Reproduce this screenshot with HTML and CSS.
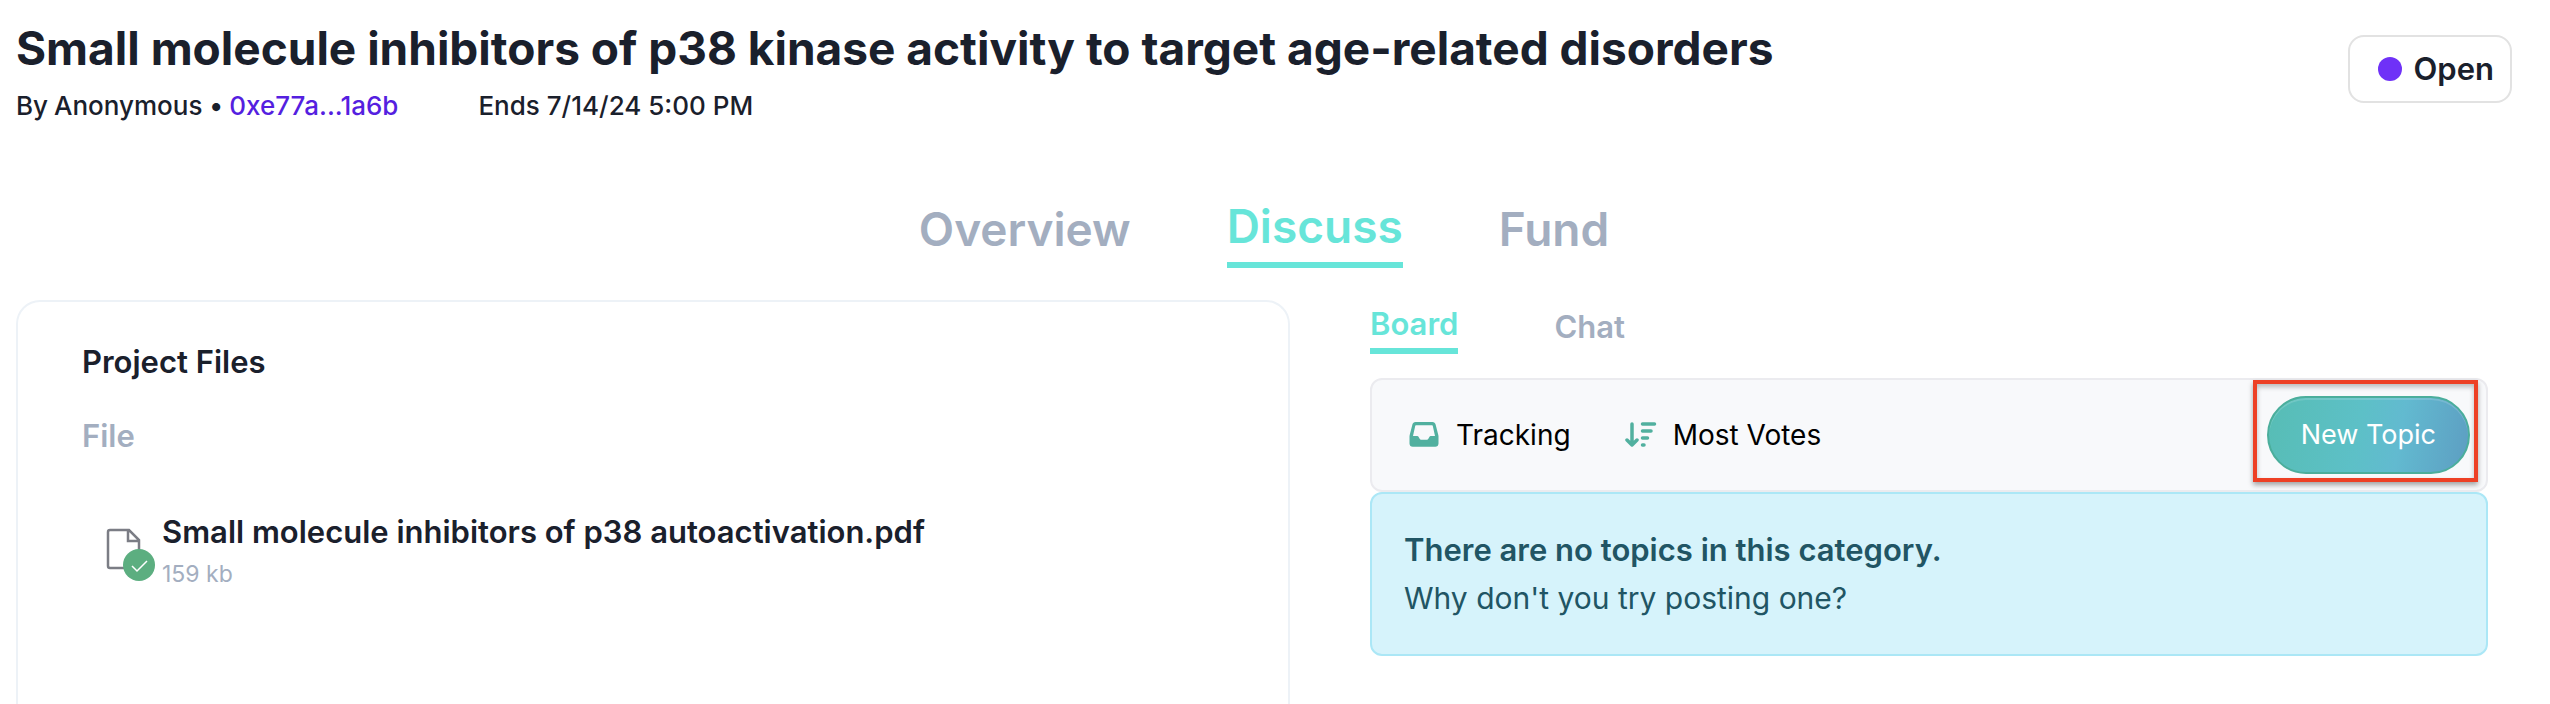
FILE: index.html
```html
<!DOCTYPE html>
<html lang="en">
<head>
<meta charset="utf-8">
<meta name="viewport" content="width=device-width, initial-scale=1">
<title>Small molecule inhibitors of p38 kinase activity</title>
<link rel="stylesheet" href="styles.css">
</head>
<body>
<div class="page">
  <header class="header">
    <div>
      <h1 class="title">Small molecule inhibitors of p38 kinase activity to target age-related disorders</h1>
      <div class="meta">
        <span class="author"><span>By</span><span>Anonymous •</span><a class="address" href="#">0xe77a...1a6b</a></span>
        <span>Ends 7/14/24 5:00 PM</span>
      </div>
    </div>
    <div class="status"><span class="dot"></span>Open</div>
  </header>

  <nav class="tabs">
    <a class="tab" href="#">Overview</a>
    <a class="tab active" href="#" aria-current="page">Discuss</a>
    <a class="tab" href="#">Fund</a>
  </nav>

  <main class="columns">
    <section class="card">
      <h2 class="card-title">Project Files</h2>
      <h3 class="card-label">File</h3>
      <div class="file">
        <svg class="file-icon" viewBox="0 0 50 54" aria-hidden="true">
          <path d="M2 4a2 2 0 0 1 2-2h19l10 10v26a2 2 0 0 1-2 2H4a2 2 0 0 1-2-2zM22 2v11h11" fill="none" stroke="#7b7d85" stroke-width="2.500"/>
          <circle cx="33" cy="37" r="16" fill="#5cae80"/>
          <path d="M26 38l5 5 10-10" fill="none" stroke="#fff" stroke-width="1.5"/>
        </svg>
        <div>
          <div class="file-name">Small molecule inhibitors of p38 autoactivation.pdf</div>
          <div class="file-size">159 kb</div>
        </div>
      </div>
    </section>

    <section class="board">
      <nav class="subtabs">
        <a class="subtab active" href="#" aria-current="page">Board</a>
        <a class="subtab" href="#">Chat</a>
      </nav>
      <div class="toolbar">
        <button class="filter" type="button">
          <svg class="icon" viewBox="0 0 32 28" aria-hidden="true">
            <path fill="#51b09f" fill-rule="evenodd" d="M7.500 1h17c1.600 0 2.700.9 3.100 2.400L30.300 14c.1.500.2 1 .2 1.500V22.500c0 2-1.300 3.300-3.300 3.300H4.800c-2 0-3.300-1.300-3.300-3.300V15.500c0-.5.100-1 .2-1.500L4.400 3.400C4.800 1.900 5.900 1 7.500 1zM8 4.200c-.5 0-.7.200-.8.700L5 15h4.300c.6 0 .9.200 1.200.7l1.300 2.300c.3.500.6.700 1.200.7h6c.6 0 .9-.2 1.200-.7l1.300-2.300c.3-.5.600-.7 1.200-.7H27L24.800 4.900c-.1-.5-.3-.7-.8-.7z"/>
          </svg>
          Tracking
        </button>
        <button class="filter" type="button">
          <svg class="icon" viewBox="0 0 32 28" aria-hidden="true">
            <path d="M7 3v21M2 19l5 5 5-5M17.500 3h12M17.500 10h8.500M17.500 17h5M17.500 24h1.500" fill="none" stroke="#51b09f" stroke-width="3.500" stroke-linecap="round" stroke-linejoin="round"/>
          </svg>
          Most Votes
        </button>
        <div class="highlight"><button class="new-topic" type="button">New Topic</button></div>
      </div>
      <div class="notice">
        <strong class="notice-title">There are no topics in this category.</strong>
        <p class="notice-text">Why don't you try posting one?</p>
      </div>
    </section>
  </main>
</div>
</body>
</html>
```
FILE: styles.css
```css
* { box-sizing: border-box; }
body { margin: 0; background: #fff; color: #1a202c; font-family: Inter, "Liberation Sans", sans-serif; }
h1, h2, h3, p { margin: 0; }
a { text-decoration: none; }
button { font-family: inherit; cursor: pointer; }

.page { display: flex; flex-direction: column; min-height: 100vh; padding: 20px 38px 0 16px; }
.header { display: flex; justify-content: space-between; align-items: flex-start; }
.title { font-size: 46px; line-height: 56px; font-weight: 700; }
.meta { display: flex; gap: 80px; margin-top: 12px; font-size: 26px; line-height: 36px; font-weight: 500; }
.author { display: flex; gap: 6px; }
.address { color: #551fe0; }
.status { display: flex; align-items: center; gap: 12px; margin-top: 15px; padding: 12px 16px 12px 28px; border: 2px solid #e2e2e2; border-radius: 16px; font-size: 31px; line-height: 40px; font-weight: 600; }
.dot { width: 24px; height: 24px; border-radius: 50%; background: #6f31f7; }

.tabs { display: flex; justify-content: center; align-items: center; gap: 96px; margin-top: 72px; }
.tab { padding-bottom: 6px; color: #a3aec0; font-size: 46px; line-height: 60px; font-weight: 600; }
.tab.active { border-bottom: 6px solid #67e5d9; color: #67e5d9; }

.columns { flex: 1; display: grid; grid-template-columns: 1274fr 1118fr; gap: 80px; margin-top: 32px; padding-right: 24px; }
.card { padding: 38px 64px; border: 2px solid #edf2f7; border-bottom: 0; border-radius: 24px 24px 0 0; }
.card-title, .card-label { font-size: 31px; line-height: 44px; font-weight: 600; }
.card-label { margin-top: 30px; color: #a3aec0; }
.file { display: flex; gap: 6px; margin: 52px 0 0 24px; }
.file-icon { width: 50px; height: 54px; margin-top: 18px; }
.file-name { font-size: 31px; line-height: 44px; font-weight: 600; }
.file-size { color: #a3aec0; font-size: 23px; line-height: 40px; }

.board { padding-top: 4px; }
.subtabs { display: flex; align-items: center; gap: 96px; }
.subtab { padding-bottom: 4px; color: #a3aec0; font-size: 31px; line-height: 40px; font-weight: 600; }
.subtab.active { border-bottom: 6px solid #67e5d9; color: #67e5d9; }
.toolbar { display: flex; align-items: center; gap: 54px; height: 114px; margin-top: 24px; padding: 0 8px 0 36px; border: 2px solid #ebebef; border-radius: 12px; background: #f8f9fb; }
.filter { display: flex; align-items: center; gap: 16px; padding: 0; border: 0; background: none; color: #000; font-size: 28px; line-height: 36px; }
.icon { width: 32px; height: 28px; }
.highlight { margin: 0 0 8px auto; padding: 12px 4px 4px 10px; border: 4px solid #ed4025; box-shadow: 0 3px 5px rgba(0, 0, 0, .35), inset 0 3px 5px rgba(0, 0, 0, .25); }
.new-topic { padding: 20px 32px; border: 2px solid #4bae9c; border-radius: 40px; background: linear-gradient(100deg, #57bdb5, #5dc0c7 45%, #62bad0 65%, #5d9ec2); box-shadow: inset 0 2px 0 rgba(255, 255, 255, .15); color: #fff; font-size: 27px; line-height: 34px; }
.notice { padding: 32px; border: 2px solid #abe7f6; border-radius: 12px; background: #d6f3fb; color: #215564; font-size: 31px; line-height: 48px; }
.notice-title { font-weight: 600; }
.notice-text { font-size: 30px; }
```
